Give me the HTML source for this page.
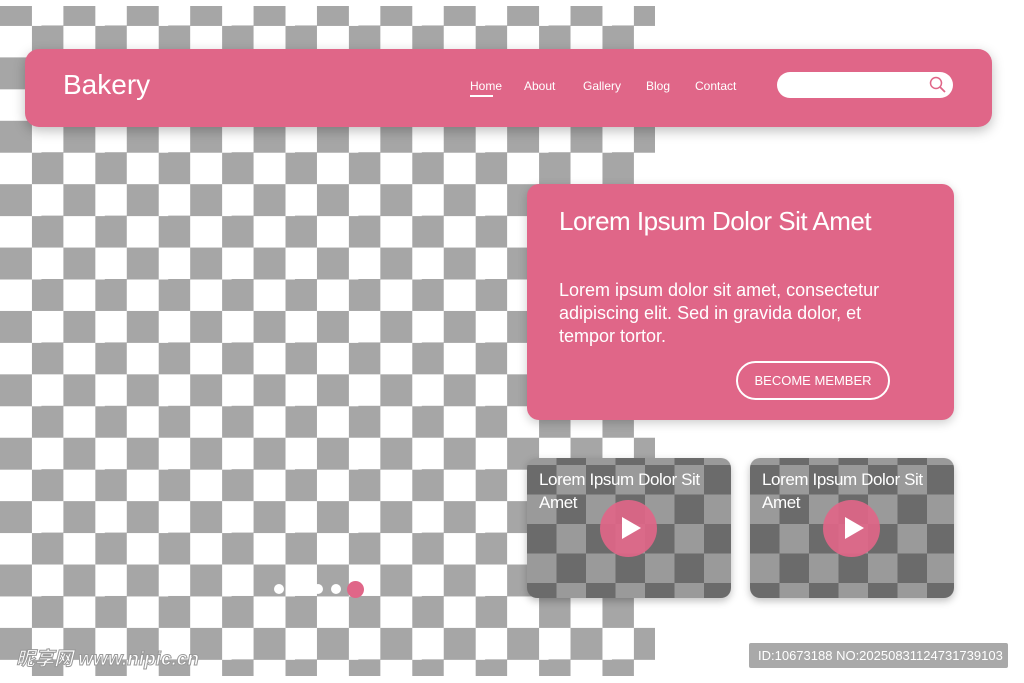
<!DOCTYPE html>
<html><head><meta charset="utf-8"><style>
*{margin:0;padding:0;box-sizing:border-box}
body{width:1024px;height:683px;position:relative;overflow:hidden;background:#fff;font-family:"Liberation Sans",sans-serif;color:#fff}
.chk{position:absolute;left:0;top:6px;width:655px;height:670px;background:conic-gradient(#fff 0 25%,#a6a6a6 0 50%,#fff 0 75%,#a6a6a6 0);background-size:63.4px 63.4px;background-position:0 -12px}
.nav{position:absolute;left:25px;top:49px;width:967px;height:78px;background:#e06688;border-radius:14px;box-shadow:0 4px 12px rgba(0,0,0,.25)}
.logo{position:absolute;left:38px;top:20px;font-size:28px}
.nav a{position:absolute;top:30px;font-size:12px;color:#fff;text-decoration:none}
.search{position:absolute;left:752px;top:23px;width:176px;height:26px;background:#fff;border-radius:13px}
.hero{position:absolute;left:527px;top:184px;width:427px;height:236px;background:#e06688;border-radius:12px;box-shadow:0 3px 10px rgba(0,0,0,.2)}
.hero h1{position:absolute;left:32px;top:22px;font-size:26px;font-weight:normal;letter-spacing:-.5px}
.hero p{position:absolute;left:32px;top:95px;width:362px;font-size:18px;line-height:23px}
.btn{position:absolute;left:209px;top:177px;width:154px;height:39px;border:2px solid #fff;border-radius:20px;font-size:13px;text-align:center;line-height:35px}
.card{position:absolute;top:458px;width:204px;height:140px;border-radius:10px;overflow:hidden;background:conic-gradient(#9a9a9a 0 25%,#6b6b6b 0 50%,#9a9a9a 0 75%,#6b6b6b 0);background-size:59px 59px;background-position:0 7px;box-shadow:0 3px 8px rgba(0,0,0,.25)}
.card .t{position:absolute;left:12px;top:10px;font-size:17px;line-height:23px;letter-spacing:-.4px}
.play{position:absolute;left:73px;top:42px;width:57px;height:57px;border-radius:50%;background:rgba(224,102,136,.92)}
.play:after{content:"";position:absolute;left:22px;top:17px;border-left:19px solid #fff;border-top:11px solid transparent;border-bottom:11px solid transparent}
.dot{position:absolute;border-radius:50%;background:#fff}
.wm{position:absolute;left:16px;top:644px;font-size:19px;font-weight:bold;font-style:italic;color:#fff;-webkit-text-stroke:1px #999;font-family:"Liberation Sans","Noto Sans CJK SC",sans-serif}
.id{position:absolute;left:749px;top:643px;width:259px;height:25px;background:#a9a9a9;font-size:13px;line-height:25px;padding-left:9px;border-radius:2px}
</style></head><body>
<div class="chk"></div>
<div class="nav">
<div class="logo">Bakery</div>
<a style="left:445px">Home</a><div style="position:absolute;left:445px;top:46px;width:23px;height:2px;background:#fff"></div>
<a style="left:499px">About</a>
<a style="left:558px">Gallery</a>
<a style="left:621px">Blog</a>
<a style="left:670px">Contact</a>
<div class="search"><svg width="20" height="20" viewBox="0 0 20 20" style="position:absolute;left:151px;top:3px"><circle cx="8" cy="8" r="5.5" fill="none" stroke="#e06688" stroke-width="1.5"/><path d="M12 12L17 17" stroke="#e06688" stroke-width="1.8"/></svg></div>
</div>
<div class="hero">
<h1>Lorem Ipsum Dolor Sit Amet</h1>
<p>Lorem ipsum dolor sit amet, consectetur adipiscing elit. Sed in gravida dolor, et tempor tortor.</p>
<div class="btn">BECOME MEMBER</div>
</div>
<div class="card" style="left:527px"><div class="t">Lorem Ipsum Dolor Sit<br>Amet</div><div class="play"></div></div>
<div class="card" style="left:750px"><div class="t">Lorem Ipsum Dolor Sit<br>Amet</div><div class="play"></div></div>
<div class="dot" style="left:274px;top:584px;width:10px;height:10px"></div>
<div class="dot" style="left:313px;top:584px;width:10px;height:10px"></div>
<div class="dot" style="left:331px;top:584px;width:10px;height:10px"></div>
<div class="dot" style="left:347px;top:581px;width:17px;height:17px;background:#e06688"></div>
<div class="wm">昵享网 www.nipic.cn</div>
<div class="id">ID:10673188 NO:20250831124731739103</div>
</body></html>
